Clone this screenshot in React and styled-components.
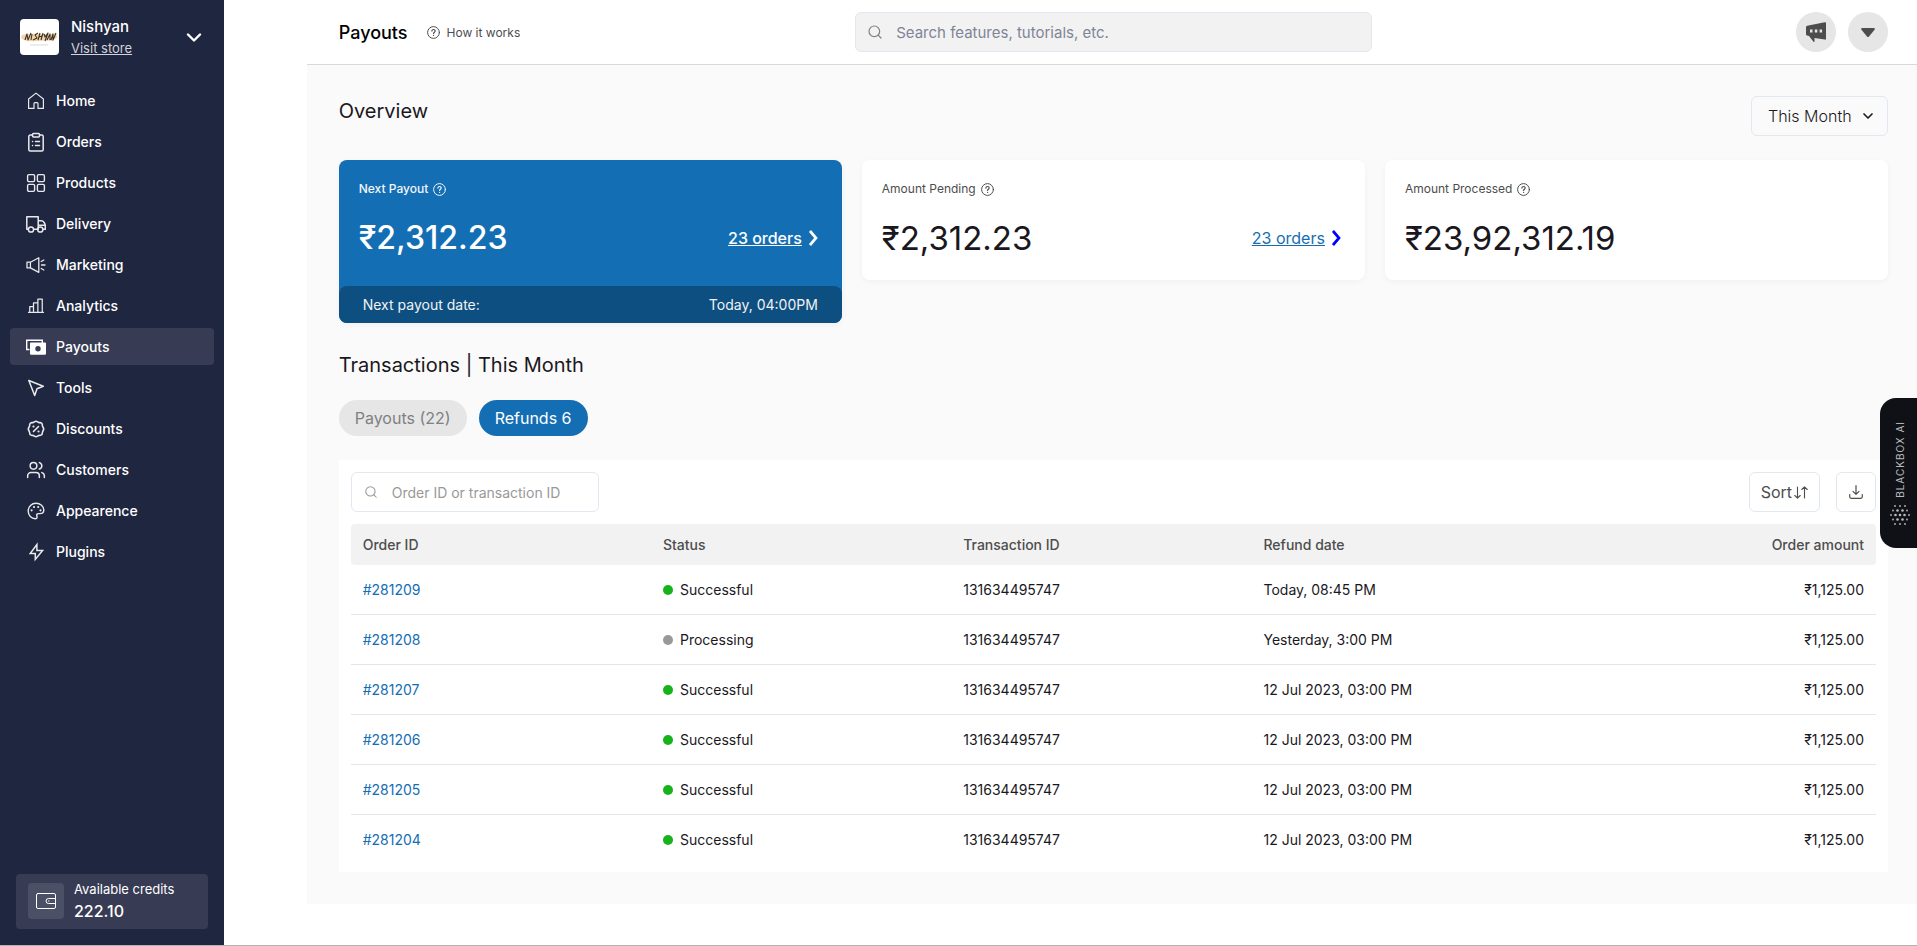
import React from "react";
import styled, { createGlobalStyle } from "styled-components";
import { PiChartBar } from "react-icons/pi";
import { Users, Search, ChevronDown } from "lucide-react";

const GlobalStyle = createGlobalStyle`
  *, *::before, *::after { box-sizing: border-box; }
  body { margin: 0; background: #fff; }
  body, button, input, select { font-family: Inter, "Liberation Sans", sans-serif; }
  h1, h2, p, ul { margin: 0; padding: 0; }
`;

const Page = styled.div`
  display: flex;
  min-height: 100vh;
  border-bottom: 1px solid #b3b3b3;
  color: #1a181e;
`;

const Rail = styled.div`
  flex: 0 0 16%;
  display: flex;
`;

const Sidebar = styled.aside`
  width: 224px;
  padding: 16px 10px;
  display: flex;
  flex-direction: column;
  background: #1f2640;
  color: #fff;
`;

const Store = styled.div`
  display: flex;
  align-items: center;
  gap: 12px;
  height: 42px;
  padding: 0 12px 0 10px;
  margin-bottom: 24px;
`;

const StoreLogo = styled.svg`
  width: 39px;
  height: 36px;
  border-radius: 4px;
  background: #fff;
`;

const StoreText = styled.div`
  flex: 1;
  display: flex;
  flex-direction: column;
  align-items: flex-start;
`;

const StoreName = styled.span`
  font-size: 15px;
  font-weight: 500;
  line-height: 22px;
`;

const StoreLink = styled.a`
  font-size: 13px;
  line-height: 20px;
  color: #d2d4d9;
`;

const PlainButton = styled.button`
  display: flex;
  padding: 0;
  border: 0;
  background: none;
  color: inherit;
  cursor: pointer;
`;

const NavList = styled.ul`
  flex: 1;
  display: flex;
  flex-direction: column;
  gap: 4px;
  list-style: none;
`;

const NavLink = styled.a`
  display: flex;
  align-items: center;
  gap: 10px;
  height: 37px;
  padding: 0 16px;
  border-radius: 4px;
  font-size: 14px;
  font-weight: 500;
  color: #fff;
  text-decoration: none;
  background: ${(p) => (p.$active ? "#373c54" : "transparent")};

  svg { width: 20px; height: 20px; opacity: ${(p) => (p.$active ? 1 : 0.9)}; }
`;

const Credits = styled.div`
  display: flex;
  align-items: center;
  gap: 10px;
  height: 55px;
  margin: 0 6px;
  padding: 0 12px 1px;
  border-radius: 4px;
  background: #373c54;
`;

const CreditsIcon = styled.span`
  display: grid;
  place-items: center;
  width: 36px;
  height: 36px;
  border-radius: 4px;
  background: #4b5066;
`;

const CreditsLabel = styled.p`
  font-size: 13px;
  line-height: 20px;
`;

const CreditsValue = styled.p`
  font-size: 16px;
  font-weight: 500;
  line-height: 24px;
`;

const Main = styled.main`
  flex: 1;
  min-width: 0;
`;

const Header = styled.header`
  display: grid;
  grid-template-columns: repeat(3, 1fr);
  align-items: center;
  height: 64px;
  padding: 0 29px 0 32px;
  position: relative;
  background: #fff;
  box-shadow: 0 1px 0 #d9d9d9;
`;

const HeaderTitle = styled.div`
  display: flex;
  align-items: center;
  gap: 19px;
`;

const Title = styled.h1`
  font-size: 18px;
  font-weight: 500;
  color: #000;
`;

const HelpLink = styled.a`
  display: flex;
  align-items: center;
  gap: 7px;
  font-size: 12px;
  color: #4d4d4d;
  text-decoration: none;
`;

const HeaderActions = styled.div`
  display: flex;
  justify-content: flex-end;
  gap: 12px;
`;

const RoundButton = styled(PlainButton)`
  align-items: center;
  justify-content: center;
  width: 40px;
  height: 40px;
  border-radius: 50%;
  background: #e6e6e6;
  color: #4d4d4d;
`;

const SearchBox = styled.label`
  display: flex;
  align-items: center;
  gap: ${(p) => (p.$compact ? "14px" : "13px")};
  width: ${(p) => (p.$compact ? "248px" : "auto")};
  height: 40px;
  padding: 0 ${(p) => (p.$compact ? "12px" : "11px")};
  border: 1px solid #e2e8f0;
  border-radius: 6px;
  background: ${(p) => (p.$compact ? "#fff" : "#f2f2f2")};
  color: ${(p) => (p.$compact ? "#999" : "#808080")};

  svg { flex: none; }
`;

const SearchInput = styled.input`
  flex: 1;
  min-width: 0;
  padding: 0;
  border: 0;
  outline: 0;
  background: none;
  font-size: ${(p) => (p.$compact ? "14px" : "15px")};
  color: #1a181e;

  &::placeholder { color: ${(p) => (p.$compact ? "#999" : "#808496")}; opacity: 1; }
`;

const Content = styled.div`
  padding: 32px 29px 32px 32px;
  background: #fafafa;
`;

const OverviewBar = styled.div`
  display: flex;
  justify-content: space-between;
  align-items: flex-start;
  margin-bottom: 24px;
`;

const SectionTitle = styled.h2`
  font-size: 20px;
  font-weight: 400;
  line-height: 30px;
`;

const PeriodBox = styled.div`
  display: grid;
  align-items: center;
  width: 137px;
  height: 40px;

  select, svg { grid-area: 1 / 1; }
  svg { justify-self: end; margin-right: 12px; pointer-events: none; }
`;

const PeriodSelect = styled.select`
  appearance: none;
  height: 40px;
  padding: 0 16px;
  border: 1px solid #e2e8f0;
  border-radius: 6px;
  background: transparent;
  font-size: 16px;
  font-weight: 300;
  color: #1a181e;
`;

const Cards = styled.div`
  display: grid;
  grid-template-columns: repeat(3, 1fr);
  align-items: start;
  gap: 20px;
  margin-bottom: 27px;
`;

const Card = styled.section`
  border-radius: 8px;
  background: ${(p) => (p.$primary ? "#146eb4" : "#fff")};
  color: ${(p) => (p.$primary ? "#fff" : "#1a181e")};
  box-shadow: 0 2px 6px rgba(26, 24, 30, 0.04);
`;

const CardBody = styled.div`
  padding: 20px 20px ${(p) => (p.$primary ? "28px" : "22px")};
`;

const CardLabel = styled.p`
  display: flex;
  align-items: center;
  gap: 5px;
  margin-bottom: 20px;
  font-size: 12px;
  font-weight: ${(p) => (p.$primary ? 500 : 400)};
  line-height: 18px;
  color: ${(p) => (p.$primary ? "#f2f6fa" : "#4d4d4d")};
`;

const AmountRow = styled.div`
  display: flex;
  align-items: center;
  justify-content: space-between;
  padding-right: 4px;
`;

const Amount = styled.p`
  font-size: ${(p) => (p.$primary ? "32px" : "33px")};
  font-weight: ${(p) => (p.$primary ? 500 : 400)};
  line-height: 40px;
`;

const OrdersLink = styled.a`
  display: flex;
  align-items: center;
  gap: 7px;
  font-size: 16px;
  font-weight: ${(p) => (p.$primary ? 500 : 400)};
  color: ${(p) => (p.$primary ? "#fff" : "#146eb4")};
  svg { color: ${(p) => (p.$primary ? "#fff" : "#00f")}; }
`;

const CardFooter = styled.div`
  display: flex;
  align-items: center;
  justify-content: space-between;
  height: 37px;
  padding: 0 24px;
  border-radius: 8px;
  background: #0e4f82;
  color: #f2f2f2;
  font-size: 14px;
`;

const Tabs = styled.div`
  display: flex;
  gap: 12px;
  margin: 20px 0 24px;
`;

const Tab = styled.button`
  height: 36px;
  padding: 0 16px;
  border: 0;
  border-radius: 18px;
  font-size: 16px;
  background: ${(p) => (p.$active ? "#146eb4" : "#e6e6e6")};
  color: ${(p) => (p.$active ? "#fff" : "#808080")};
`;

const Panel = styled.section`
  padding: 12px 12px 7px;
  background: #fff;
`;

const Toolbar = styled.div`
  display: flex;
  justify-content: space-between;
  margin-bottom: 12px;
`;

const ToolbarActions = styled.div`
  display: flex;
  gap: 16px;
`;

const ToolButton = styled.button`
  display: flex;
  align-items: center;
  justify-content: center;
  gap: 2px;
  height: 40px;
  min-width: 40px;
  padding: 0 ${(p) => (p.$icon ? "0" : "11px")};
  border: 1px solid #e2e8f0;
  border-radius: 6px;
  background: #fff;
  font-size: 16px;
  color: #4d4d4d;
`;

const Table = styled.table`
  display: block;
  font-size: 14px;

  thead, tbody { display: block; }
  tr {
    display: grid;
    grid-template-columns: repeat(5, 1fr);
    align-items: center;
    padding: 0 12px;
  }
  th, td { padding: 0; text-align: left; }
  th:last-child, td:last-child { text-align: right; }
  th { font-weight: 500; color: #4d4d4d; }
  thead tr { height: 41px; border-radius: 4px; background: #f2f2f2; }
  tbody tr { height: 50px; border-bottom: 1px solid #e6e6e6; }
  tbody tr:last-child { border-bottom-color: transparent; }
  a { color: #146eb4; text-decoration: none; }
`;

const Status = styled.span`
  display: flex;
  align-items: center;
  gap: 7px;

  &::before {
    content: "";
    width: 10px;
    height: 10px;
    border-radius: 50%;
    background: ${(p) => (p.$done ? "#17b31b" : "#999")};
  }
`;

const Assistant = styled.button`
  position: fixed;
  right: 0;
  top: 398px;
  display: flex;
  flex-direction: column;
  align-items: center;
  justify-content: flex-end;
  gap: 7px;
  width: 37px;
  height: 150px;
  padding: 0 0 23px 3px;
  border: 0;
  border-radius: 16px 0 0 16px;
  background: #0f1117;
  color: #b9babd;
`;

const AssistantLabel = styled.span`
  writing-mode: vertical-rl;
  transform: rotate(180deg);
  font-size: 10px;
  letter-spacing: 1px;
  line-height: 12px;
`;

const line = { fill: "none", stroke: "currentColor", strokeLinecap: "round", strokeLinejoin: "round" };

const HomeIcon = () => (
  <svg viewBox="0 0 20 20" {...line} strokeWidth="1.2">
    <path d="M2.6 17.4V8L10 2.1 17.4 8v9.4H12v-4.8a1 1 0 0 0-1-1H9a1 1 0 0 0-1 1v4.8z" />
  </svg>
);
const OrdersIcon = () => (
  <svg viewBox="0 0 20 20" {...line} strokeWidth="1.5">
    <path d="M6.5 3H4.3A1.5 1.5 0 0 0 2.8 4.5v13A1.5 1.5 0 0 0 4.3 19h11.4a1.5 1.5 0 0 0 1.5-1.5v-13A1.5 1.5 0 0 0 15.7 3h-2.2" />
    <rect x="6.5" y="1.5" width="7" height="3.5" rx="1" />
    <path d="M9.500 9.500h4M9.500 13.500h4M6.500 9.500h.1M6.500 13.500h.1" />
  </svg>
);
const ProductsIcon = () => (
  <svg viewBox="0 0 20 20" {...line} strokeWidth="1.4">
    <rect x="1.6" y="1.6" width="7" height="7" rx="1.3" />
    <rect x="11.4" y="1.6" width="7" height="7" rx="1.3" />
    <rect x="1.6" y="11.4" width="7" height="7" rx="1.3" />
    <rect x="11.4" y="11.4" width="7" height="7" rx="1.3" />
  </svg>
);
const DeliveryIcon = () => (
  <svg viewBox="0 0 20 20" {...line} strokeWidth="1.5">
    <path d="M2.3 15.3H.8V2.700h11.400v12.600H7.800M12.200 6.700h3.200c2 0 3.900 3 3.900 5.300v3.300h-2.100M12.200 11.200h6.600" />
    <circle cx="5" cy="15.5" r="2.6" />
    <circle cx="14.3" cy="15.5" r="2.6" />
  </svg>
);
const MarketingIcon = () => (
  <svg viewBox="0 0 20 20" {...line} strokeWidth="1.3">
    <path d="M1 7.2h3.400L12.800 2.700v14.600L4.400 12.900H1zM4.400 7.200v5.700M15.500 10H19M15.200 6.500l2.600-1.500M15.200 13.500l2.600 1.500" />
  </svg>
);
const PayoutsIcon = () => (
  <svg viewBox="0 0 20 20">
    <path fill="none" stroke="currentColor" strokeWidth="1.4" d="M3.500 12.500H.700V3.200h15.600V6" />
    <path fill="currentColor" fillRule="evenodd" d="M5 5.500H19a1 1 0 0 1 1 1v10.300a1 1 0 0 1-1 1H5a1 1 0 0 1-1-1V6.500a1 1 0 0 1 1-1zM12 9a2.700 2.700 0 1 0 0 5.400A2.700 2.700 0 0 0 12 9z" />
  </svg>
);
const ToolsIcon = () => (
  <svg viewBox="0 0 20 20" {...line} strokeWidth="1.5">
    <path d="M2.800 2.500 17.300 8.300 11 10.800 8.700 17.600z" />
  </svg>
);
const DiscountsIcon = () => (
  <svg viewBox="0 0 20 20" {...line} strokeWidth="1.6">
    <path d="M10 2.300c1.300 0 1.700 1 2.800 1.300 1.100.200 2.100-.200 2.900.600.800.800.500 1.900.800 2.900.300 1.100 1.200 1.600 1.200 2.900s-.900 1.800-1.200 2.900c-.300 1 0 2.100-.800 2.900-.800.800-1.800.500-2.900.700-1.100.300-1.500 1.200-2.800 1.200s-1.700-.900-2.800-1.200c-1.100-.200-2.100.100-2.900-.700-.800-.800-.500-1.900-.800-2.900C3.200 11.800 2.300 11.300 2.300 10s.900-1.800 1.200-2.900c.300-1 0-2.100.800-2.900.800-.800 1.800-.400 2.900-.600C8.300 3.300 8.700 2.300 10 2.300zM7.500 12.500l5-5" />
    <path strokeWidth="2.200" d="M7.500 7.500h.01M12.500 12.500h.01" />
  </svg>
);
const AppearanceIcon = () => (
  <svg viewBox="0 0 20 20" {...line} strokeWidth="1.4">
    <path d="M10 2.200c4.400 0 7.800 3 7.800 6.700 0 2.400-1.600 3.700-3.800 3.700h-1.600c-1.300 0-2 .9-1.600 2.100.5 1.400.3 3.200-1.400 3.100C5.300 17.600 2.200 14.300 2.200 10A7.800 7.800 0 0 1 10 2.200z" />
    <path strokeWidth="2.2" d="M8 6h.01M12.200 6h.01M5.600 9.300h.01M14.500 9.300h.01" />
  </svg>
);
const PluginsIcon = () => (
  <svg viewBox="0 0 20 20" {...line} strokeWidth="1.5" strokeLinejoin="miter">
    <path d="M10.900 2.500v6h5.700L9.300 17.500v-6H4.200z" />
  </svg>
);
const WalletIcon = () => (
  <svg width="20" height="16" viewBox="0 0 20 16" {...line} strokeWidth="1">
    <rect x=".5" y=".5" width="19" height="15" rx="1.5" />
    <path d="M19.500 5.500h-7a2.500 2.500 0 0 0 0 5h7M12.500 8h.5" />
  </svg>
);
const HelpIcon = () => (
  <svg width="13" height="13" viewBox="0 0 13 13" {...line} strokeWidth="1">
    <circle cx="6.5" cy="6.5" r="5.9" />
    <path strokeWidth="1.2" d="M4.900 5.100c0-2.200 3.300-2 3.300-.1 0 1.200-1.600 1.200-1.600 2.400M6.600 9.400h.01" />
  </svg>
);
const DownIcon = () => (
  <svg width="16" height="9" viewBox="0 0 16 9" {...line} strokeWidth="2.4">
    <path d="m2 1.500 6 6 6-6" />
  </svg>
);
const RightIcon = () => (
  <svg width="9" height="16" viewBox="0 0 9 16" {...line} strokeLinecap="butt" strokeLinejoin="miter" strokeWidth="2.7">
    <path d="m1 1 6 7-6 7" />
  </svg>
);
const FeedbackIcon = () => (
  <svg width="20" height="20" viewBox="0 0 20 20" fill="currentColor">
    <path fillRule="evenodd" d="M1.200 3.700 18.800.2Q20 0 20 1v15.700q0 1.100-1.200.9L8.500 16v3.400q-.1 1-1 .3L3 14l-2-.4q-1-.3-1-1.300V5q0-1.100 1.200-1.300zM4 7.500v3h2.500v-3zm4.800 0v3h2.500v-3zm4.800 0v3h2.500v-3z" />
  </svg>
);
const CaretIcon = () => (
  <svg width="14" height="9" viewBox="0 0 14 9" fill="currentColor">
    <path d="M1.200 0h11.600q1.500.200.900 1.600L8 8.500q-1 1-2 0L.3 1.600Q-.3.200 1.200 0z" />
  </svg>
);
const SortIcon = () => (
  <svg width="14" height="13" viewBox="0 0 14 13" {...line} strokeWidth="1.1">
    <path d="M3.500 1v11M.8 9.500l2.700 2.700 2.700-2.700M10.500 12V1M7.800 3.500 10.500.8l2.700 2.700" />
  </svg>
);
const DownloadIcon = () => (
  <svg width="14" height="14" viewBox="0 0 14 14" {...line} strokeWidth="1.2">
    <path d="M7 .7v8.500M4 6.300l3 3 3-3M.7 9.500v2.300q0 1.500 1.500 1.500h9.600q1.500 0 1.500-1.500V9.500" />
  </svg>
);

const dotRows = [
  [1, [5, 10, 15]],
  [5.5, [3, 7.5, 12.5, 17]],
  [10, [1, 5.5, 10, 14.5, 19]],
  [14.5, [3, 7.5, 12.5, 17]],
  [19, [5, 10, 15]],
];
const DotsIcon = () => (
  <svg width="20" height="20" viewBox="0 0 20 20" fill="currentColor">
    {dotRows.map(([y, xs]) =>
      xs.map((x) => (
        <circle key={`${x}-${y}`} cx={x} cy={y} r={Math.abs(y - 10) + Math.abs(x - 10) < 8 ? 1.3 : 0.9} />
      ))
    )}
  </svg>
);

const navItems = [
  ["Home", HomeIcon],
  ["Orders", OrdersIcon],
  ["Products", ProductsIcon],
  ["Delivery", DeliveryIcon],
  ["Marketing", MarketingIcon],
  ["Analytics", PiChartBar],
  ["Payouts", PayoutsIcon],
  ["Tools", ToolsIcon],
  ["Discounts", DiscountsIcon],
  ["Customers", () => <Users strokeWidth={1.8} />],
  ["Appearence", AppearanceIcon],
  ["Plugins", PluginsIcon],
];

const cards = [
  { label: "Next Payout", amount: "₹2,312.23", orders: "23 orders", primary: true },
  { label: "Amount Pending", amount: "₹2,312.23", orders: "23 orders" },
  { label: "Amount Processed", amount: "₹23,92,312.19" },
];

const refunds = [
  ["#281209", "Successful", "Today, 08:45 PM"],
  ["#281208", "Processing", "Yesterday, 3:00 PM"],
  ["#281207", "Successful", "12 Jul 2023, 03:00 PM"],
  ["#281206", "Successful", "12 Jul 2023, 03:00 PM"],
  ["#281205", "Successful", "12 Jul 2023, 03:00 PM"],
  ["#281204", "Successful", "12 Jul 2023, 03:00 PM"],
];

export default function App() {
  return (
    <>
      <GlobalStyle />
      <Page>
        <Rail>
          <Sidebar>
            <Store>
              <StoreLogo viewBox="0 0 39 36">
                <path fill="#f6d3a4" d="M2 16q6-2 15-1t19-1l1 4-4 4q-8-1-16 0T4 21L1 19z" />
                <path
                  fill="none"
                  stroke="#3a3228"
                  strokeWidth="1.1"
                  strokeLinejoin="round"
                  d="m5 21 2-6 1 6 3-7M12 15l-1 6M18 14l-3 2 2 3-4 2M20 14l-2 7M23 14l-2 7M19 18l3-1M24 15l1 3 3-4-3 8M27 21l3-6v6M31 21l2-6v6l3-7"
                />
                <path stroke="#d9d9d9" d="M10 26h18" />
              </StoreLogo>
              <StoreText>
                <StoreName>Nishyan</StoreName>
                <StoreLink href="#store">Visit store</StoreLink>
              </StoreText>
              <PlainButton aria-label="Switch store"><DownIcon /></PlainButton>
            </Store>
            <NavList>
              {navItems.map(([name, Icon]) => (
                <li key={name}>
                  <NavLink href={`#${name.toLowerCase()}`} $active={name === "Payouts"}>
                    <Icon />
                    {name}
                  </NavLink>
                </li>
              ))}
            </NavList>
            <Credits>
              <CreditsIcon><WalletIcon /></CreditsIcon>
              <div>
                <CreditsLabel>Available credits</CreditsLabel>
                <CreditsValue>222.10</CreditsValue>
              </div>
            </Credits>
          </Sidebar>
        </Rail>

        <Main>
          <Header>
            <HeaderTitle>
              <Title>Payouts</Title>
              <HelpLink href="#help"><HelpIcon />How it works</HelpLink>
            </HeaderTitle>
            <SearchBox>
              <Search size={16} strokeWidth={1.8} />
              <SearchInput aria-label="Search features" placeholder="Search features, tutorials, etc." />
            </SearchBox>
            <HeaderActions>
              <RoundButton aria-label="Messages"><FeedbackIcon /></RoundButton>
              <RoundButton aria-label="Account menu"><CaretIcon /></RoundButton>
            </HeaderActions>
          </Header>

          <Content>
            <OverviewBar>
              <SectionTitle>Overview</SectionTitle>
              <PeriodBox>
                <PeriodSelect aria-label="Period" defaultValue="This Month">
                  <option>This Month</option>
                  <option>Last Month</option>
                </PeriodSelect>
                <ChevronDown size={16} strokeWidth={2.5} />
              </PeriodBox>
            </OverviewBar>

            <Cards>
              {cards.map(({ label, amount, orders, primary }) => (
                <Card key={label} $primary={primary}>
                  <CardBody $primary={primary}>
                    <CardLabel $primary={primary}>{label}<HelpIcon /></CardLabel>
                    <AmountRow>
                      <Amount $primary={primary}>{amount}</Amount>
                      {orders && <OrdersLink href="#orders" $primary={primary}>{orders}<RightIcon /></OrdersLink>}
                    </AmountRow>
                  </CardBody>
                  {primary && (
                    <CardFooter>
                      <span>Next payout date:</span>
                      <span>Today, 04:00PM</span>
                    </CardFooter>
                  )}
                </Card>
              ))}
            </Cards>

            <SectionTitle>Transactions | This Month</SectionTitle>
            <Tabs>
              <Tab>Payouts (22)</Tab>
              <Tab $active>Refunds 6</Tab>
            </Tabs>

            <Panel>
              <Toolbar>
                <SearchBox $compact>
                  <Search size={14} strokeWidth={1.8} />
                  <SearchInput $compact aria-label="Search refunds" placeholder="Order ID or transaction ID" />
                </SearchBox>
                <ToolbarActions>
                  <ToolButton>Sort<SortIcon /></ToolButton>
                  <ToolButton $icon aria-label="Download"><DownloadIcon /></ToolButton>
                </ToolbarActions>
              </Toolbar>
              <Table>
                <thead>
                  <tr>
                    <th>Order ID</th>
                    <th>Status</th>
                    <th>Transaction ID</th>
                    <th>Refund date</th>
                    <th>Order amount</th>
                  </tr>
                </thead>
                <tbody>
                  {refunds.map(([id, status, date]) => (
                    <tr key={id}>
                      <td><a href={id}>{id}</a></td>
                      <td><Status $done={status === "Successful"}>{status}</Status></td>
                      <td>131634495747</td>
                      <td>{date}</td>
                      <td>₹1,125.00</td>
                    </tr>
                  ))}
                </tbody>
              </Table>
            </Panel>
          </Content>
        </Main>
      </Page>
      <Assistant>
        <AssistantLabel>BLACKBOX AI</AssistantLabel>
        <DotsIcon />
      </Assistant>
    </>
  );
}
